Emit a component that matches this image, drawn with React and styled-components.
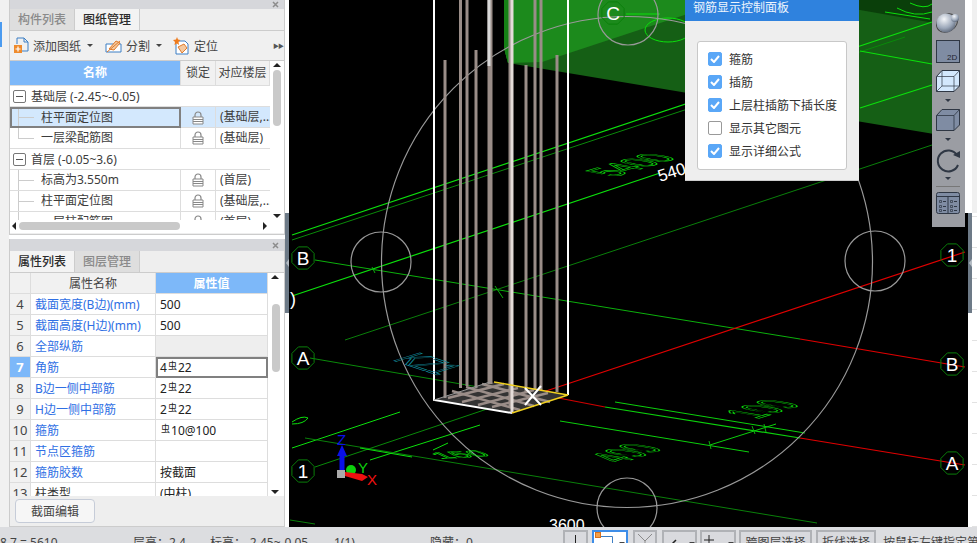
import React from 'react';
import styled, { createGlobalStyle } from 'styled-components';

const GlobalStyle = createGlobalStyle`
  html, body { margin: 0; padding: 0; width: 977px; height: 543px; overflow: hidden; background: #fff; }
  * { box-sizing: border-box; }
  body { font-family: "Noto Sans", "Noto Sans CJK SC", sans-serif; font-size: 12px; color: #333; }
`;

const Page = styled.div`
  width: 977px;
  height: 543px;
  display: flex;
  flex-direction: column;
  position: relative;
  overflow: hidden;
`;

const Main = styled.div`
  height: 527px;
  display: flex;
`;

const LeftGutter = styled.div`
  width: 9px;
  background: #f1f1f1;
  padding-top: 22px;
  &::before {
    content: '';
    display: block;
    width: 2px;
    height: 25px;
    background: #4b9bf0;
  }
`;

const Sidebar = styled.div`
  width: 276px;
  display: flex;
  flex-direction: column;
  gap: 4px;
`;

const Panel = styled.section`
  height: ${p => p.$h}px;
  display: flex;
  flex-direction: column;
  background: #eee;
  border-left: 1px solid #ccc;
  border-right: 1px solid #ccc;
  border-bottom: 1px solid #ccc;
`;

const PanelHead = styled.div`
  height: ${p => p.$h}px;
  flex: none;
  background: #d6d7db;
  display: flex;
  align-items: center;
  justify-content: flex-end;
  padding-right: 5px;
`;

const Tabs = styled.div`
  height: 22px;
  flex: none;
  display: flex;
  border-bottom: 1px solid #ccc;
`;

const Tab = styled.div`
  width: 65px;
  text-align: center;
  font-size: 12px;
  line-height: 21px;
  font-weight: 500;
  color: ${p => (p.$active ? '#2b2b2b' : '#8a8a8a')};
  background: ${p => (p.$active ? '#f3f3f3' : '#dedede')};
  border-right: 1px solid #ccc;
`;

const Toolbar = styled.div`
  height: 30px;
  flex: none;
  display: flex;
  align-items: center;
  padding-left: 4px;
  background: #f0f0f0;
  border-bottom: 1px solid #ccc;
  color: #444;
  position: relative;
`;

const ToolItem = styled.div`
  display: flex;
  align-items: center;
  gap: 4px;
  margin-right: ${p => p.$gap}px;
  font-size: 12px;
`;

const Caret = styled.span`
  width: 0;
  height: 0;
  margin-left: 2px;
  border: 3px solid transparent;
  border-top: 3px solid #444;
  border-bottom: 0;
`;

const More = styled.span`
  position: absolute;
  right: 1px;
  top: 10px;
  font-size: 6px;
  color: #555;
  letter-spacing: -1px;
`;

const TreeWrap = styled.div`
  height: 172px;
  flex: none;
  display: grid;
  grid-template-columns: 260px 14px;
  grid-template-rows: 159px 13px;
  background: #fff;
`;

const TreeBody = styled.div`
  overflow: hidden;
`;

const TreeHead = styled.div`
  display: grid;
  grid-template-columns: 171px 35px 54px;
  height: 25px;
  line-height: 24px;
  background: #f1f1f1;
  border-bottom: 1px solid #ddd;
  overflow: hidden;
  white-space: nowrap;
`;

const HeadCell = styled.div`
  text-align: center;
  border-right: 1px solid #ddd;
  font-weight: ${p => (p.$active ? 700 : 400)};
  background: ${p => (p.$active ? '#7db8f9' : 'transparent')};
  color: ${p => (p.$active ? '#fff' : '#444')};
  overflow: hidden;
`;

const GroupRow = styled.div`
  height: 21px;
  display: flex;
  align-items: center;
  gap: 5px;
  padding-left: 3px;
  border-bottom: 1px solid #ddd;
  color: #3c3c3c;
`;

const Toggle = styled.span`
  width: 13px;
  height: 13px;
  border: 1px solid #777;
  border-radius: 2px;
  display: flex;
  align-items: center;
  justify-content: center;
  &::before {
    content: '';
    width: 7px;
    height: 1px;
    background: #555;
  }
`;

const TreeRow = styled.div`
  height: 21px;
  display: grid;
  grid-template-columns: 171px 35px 54px;
  border-bottom: 1px solid #ddd;
  background: ${p => (p.$selected ? '#d3e8fd' : '#fff')};
  color: #3c3c3c;
  white-space: nowrap;
`;

const NameCell = styled.div`
  display: flex;
  align-items: stretch;
  line-height: 20px;
  padding-left: 8px;
  border-right: 1px solid #ddd;
  ${p => p.$selected && 'border: 2px solid #808080; padding-left: 6px; line-height: 17px;'}
`;

const Connector = styled.span`
  width: 23px;
  flex: none;
  background:
    linear-gradient(#ccc, #ccc) 0 0 / 1px ${p => (p.$last ? '50%' : '100%')} no-repeat,
    linear-gradient(#ccc, #ccc) 0 50% / 16px 1px no-repeat;
`;

const LockCell = styled.div`
  display: flex;
  align-items: center;
  justify-content: center;
  border-right: 1px solid #ddd;
`;

const FloorCell = styled.div`
  padding-left: 4px;
  line-height: 20px;
  overflow: hidden;
`;

const VScroll = styled.div`
  background: #fff;
  display: flex;
  flex-direction: column;
  align-items: center;
  position: relative;
  padding-top: 9px;
  &::before, &::after {
    content: '';
    position: absolute;
    left: 3px;
    border: 4px solid transparent;
  }
  &::before { top: 2px; border-top: 0; border-bottom: 4px solid #222; }
  &::after { bottom: 2px; border-bottom: 0; border-top: 4px solid #222; }
`;

const VThumb = styled.div`
  width: 8px;
  height: ${p => p.$h}px;
  margin-top: ${p => p.$top}px;
  border-radius: 4px;
  background: #c9c9c9;
`;

const HScroll = styled.div`
  position: relative;
  padding: 2px 0 0 9px;
  background: #fff;
  &::before, &::after {
    content: '';
    position: absolute;
    top: 2px;
    border: 4px solid transparent;
  }
  &::before { left: 2px; border-left: 0; border-right: 4px solid #222; }
  &::after { right: 3px; border-right: 0; border-left: 4px solid #222; }
`;

const HThumb = styled.div`
  width: 161px;
  height: 8px;
  border-radius: 4px;
  background: #c9c9c9;
`;

const Corner = styled.div`
  background: #fff;
`;

const PropWrap = styled.div`
  height: 223px;
  flex: none;
  display: grid;
  grid-template-columns: 258px 16px;
  background: #fff;
  overflow: hidden;
`;

const PropGrid = styled.div`
  display: grid;
  grid-template-columns: 21px 125px 112px;
  grid-auto-rows: 21px;
  overflow: hidden;
  white-space: nowrap;
`;

const PropHead = styled.div`
  text-align: center;
  line-height: 21px;
  background: ${p => (p.$active ? '#7db8f9' : '#f1f1f1')};
  color: ${p => (p.$active ? '#fff' : '#444')};
  font-weight: ${p => (p.$active ? 600 : 400)};
  border-right: 1px solid #ddd;
  border-bottom: 1px solid #ddd;
`;

const IndexCell = styled.div`
  text-align: center;
  font-size: 13px;
  line-height: 21px;
  background: ${p => (p.$active ? '#7db8f9' : '#f1f1f1')};
  color: ${p => (p.$active ? '#fff' : '#444')};
  font-weight: ${p => (p.$active ? 700 : 400)};
  border-right: 1px solid #ddd;
  border-bottom: 1px solid #ddd;
`;

const LabelCell = styled.div`
  padding-left: 4px;
  line-height: 21px;
  color: ${p => (p.$plain ? '#333' : '#2f6fe4')};
  border-right: 1px solid #ddd;
  border-bottom: 1px solid #ddd;
`;

const ValueCell = styled.div`
  padding-left: 4px;
  line-height: 21px;
  color: #222;
  background: ${p => (p.$muted ? '#eee' : '#fff')};
  border-right: 1px solid #ddd;
  border-bottom: 1px solid #ddd;
  ${p => p.$selected && 'border: 2px solid #808080; padding-left: 2px; line-height: 17px;'}
`;

const Rebar = styled.span`
  font-size: 9px;
  position: relative;
  top: -3px;
  margin: 0 1px;
`;

const PropFoot = styled.div`
  flex: 1;
  padding: 3px 0 0 5px;
`;

const FootButton = styled.button`
  width: 80px;
  height: 24px;
  padding: 0;
  background: #f6f6f6;
  border: 1px solid #c6ccd8;
  border-radius: 4px;
  font: inherit;
  color: #444;
`;

const Splitter = styled.div`
  width: 4px;
  flex: none;
  background: #fff;
  padding-top: 213px;
`;

const SplitGrip = styled.div`
  height: 100px;
  background: #6d7a87;
  display: flex;
  align-items: center;
  justify-content: center;
  &::before {
    content: '';
    border: 4px solid transparent;
    border-left: 0;
    border-right: 3px solid #b4bcc4;
  }
`;

const Canvas = styled.div`
  width: 679px;
  flex: none;
  background: #000;
  position: relative;
  overflow: hidden;
`;

const Drawing = styled.svg`
  display: block;
  width: 679px;
  height: 527px;
`;

const ControlPanel = styled.div`
  position: absolute;
  left: 396px;
  top: 0;
  width: 174px;
  height: 181px;
  background: #eee;
  border-bottom: 1px solid #ccc;
`;

const ControlTitle = styled.div`
  height: 21px;
  background: #2f82de;
  color: #eef5fd;
  line-height: 15px;
  padding-left: 8px;
  font-size: 12px;
`;

const ControlBox = styled.div`
  margin: 20px 12px 0 12px;
  height: 129px;
  background: #fff;
  border: 1px solid #c8c8c8;
  border-radius: 3px;
  padding: 5px 0 0 10px;
`;

const CheckRow = styled.div`
  height: 23px;
  display: flex;
  align-items: center;
  gap: 7px;
  color: #333;
`;

const CheckBox = styled.span`
  width: 14px;
  height: 14px;
  border-radius: 2px;
  display: flex;
  align-items: center;
  justify-content: center;
  background: ${p => (p.$on ? '#5aa7f7' : '#fff')};
  border: 1px solid ${p => (p.$on ? '#5aa7f7' : '#999')};
`;

const ViewTools = styled.div`
  position: absolute;
  left: 643px;
  top: 0;
  width: 33px;
  height: 227px;
  background: #9b9da3;
`;

const RightCover = styled.div`
  position: absolute;
  right: 0;
  top: 0;
  width: 12px;
  height: 213px;
  background: linear-gradient(to right, #fff 7px, #f0f0f0 7px);
`;

const RightEdge = styled.div`
  width: 5px;
  flex: none;
  background: repeating-linear-gradient(#fff 0, #fff 30px, #e2e2e2 30px, #e2e2e2 31px);
`;

const StatusBar = styled.footer`
  height: 16px;
  flex: none;
  background: #dcdde0;
  display: flex;
  align-items: flex-start;
  overflow: hidden;
  color: #444;
  white-space: nowrap;
`;

const StatusText = styled.span`
  width: ${p => p.$w}px;
  flex: none;
  margin-top: 8px;
  line-height: 16px;
`;

const StatusButton = styled.div`
  width: ${p => p.$w}px;
  height: 26px;
  flex: none;
  margin: 3px ${p => p.$gap}px 0 0;
  background: ${p => (p.$active ? '#fff' : '#d9dade')};
  border: ${p => (p.$active ? '2px solid #3d8de8' : '2px solid #b0b2b6')};
  border-bottom: 0;
  padding-top: 3px;
  text-align: center;
  line-height: 16px;
  overflow: hidden;
`;

const StatusGlyph = styled.svg`
  display: block;
  margin-top: -3px;
`;

const CloseMark = () => (
  <svg width="7" height="7" viewBox="0 0 7 7">
    <path d="M1 1l5 5M6 1L1 6" stroke="#8c8c8c" strokeWidth="1.500" />
  </svg>
);

const LockIcon = () => (
  <svg width="12" height="14" viewBox="0 0 12 14">
    <path d="M3 6V4a3 3 0 0 1 6 0v2" fill="none" stroke="#888" strokeWidth="1.2" />
    <path d="M1 6h10v7H1z" fill="#fff" stroke="#888" />
    <path d="M1 8.5h10M1 10.5h10" stroke="#888" />
  </svg>
);

const AddIcon = () => (
  <svg width="15" height="17" viewBox="0 0 15 17">
    <path d="M3 7V1h7l4 4v9H8" fill="none" stroke="#3d7fc4" />
    <path d="M10 1v4h4" fill="none" stroke="#3d7fc4" />
    <path d="M0 8h8v8H0z" fill="#ee8a2c" />
    <path d="M4 9.5v5M1.5 12h5" stroke="#fff" strokeWidth="1.2" />
  </svg>
);

const SplitIcon = () => (
  <svg width="17" height="16" viewBox="0 0 17 16">
    <path d="M1 6h15v8H1z" fill="#fff" stroke="#3d7fc4" />
    <path d="M4 11l7-8 4 2-6 7z" fill="#f4c9a0" stroke="#e07a2a" />
    <path d="M2 14l13-11" stroke="#e07a2a" />
  </svg>
);

const LocateIcon = () => (
  <svg width="17" height="18" viewBox="0 0 17 18">
    <path d="M6 4h6l3 3v10H3V7" fill="#fff" stroke="#3d7fc4" />
    <path d="M5 10l6-3 3 4-5 5z" fill="#f4c9a0" stroke="#e07a2a" />
    <path d="M4 0l1 2.500 2.500.5L5.500 5 6 8 4 6.500 1.500 8 2 5 0 3l3-.5z" fill="#ee7a1c" />
  </svg>
);

const Tick = () => (
  <svg width="10" height="8" viewBox="0 0 10 8">
    <path d="M1 4l3 3 5-6" fill="none" stroke="#fff" strokeWidth="2" />
  </svg>
);

const octagon = (cx, cy, r) => {
  const pts = [];
  for (let i = 0; i < 8; i++) {
    const a = (Math.PI / 4) * i + Math.PI / 8;
    pts.push(`${(cx + r * Math.cos(a)).toFixed(1)},${(cy + r * Math.sin(a)).toFixed(1)}`);
  }
  return pts.join(' ');
};

// page coordinates: x1 y1 x2 y2 colour width
const lines = [
  [292, 235, 932, 22, '#0ce00c', 1.2],
  [292, 240, 905, 37, '#0a8a0a', 1],
  [292, 296, 660, 173, '#0ce00c', 1.2],
  [860, 108, 932, 85, '#0ce00c', 1.2],
  [345, 340, 932, 145, '#0a7f0a', 1],
  [860, 51, 932, 64, '#0ce00c', 1.2],
  [315, 260, 800, 339, '#0cb00c', 1],
  [800, 339, 965, 367, '#e00000', 1.2],
  [543, 392, 965, 252, '#e00000', 1.2],
  [310, 358, 490, 389, '#0a8a0a', 1],
  [543, 395, 605, 407, '#d00000', 1.2],
  [605, 407, 800, 438, '#0cd00c', 1.2],
  [800, 438, 965, 465, '#e00000', 1.2],
  [615, 402, 805, 433, '#0cd00c', 1],
  [560, 421, 749, 452, '#0cd00c', 1],
  [710, 445, 776, 424, '#0cd00c', 1],
  [315, 467, 490, 408, '#0a8a0a', 1],
  [370, 460, 480, 425, '#0ce00c', 1],
  [292, 448, 400, 412, '#0ce00c', 1],
  [305, 438, 817, 523, '#0a7f0a', 1],
  [360, 448, 412, 457, '#0ce00c', 1],
  [290, 520, 315, 524, '#0a7f0a', 1],
  [433, 450, 448, 443, '#0ce00c', 1],
];

const bars = [
  [445, 60, 398, 3], [460.5, 0, 388, 3], [467, 0, 386, 3], [476, 50, 388, 3],
  [490, 0, 384, 5], [510, 0, 406, 3], [526, 65, 392, 3], [535, 0, 390, 3],
  [541, 0, 390, 3], [557, 55, 392, 3],
];

const bubbles = [
  [303, 258, 'B'], [303, 358, 'A'], [303, 471, '1'], [613, 13, 'C'],
  [952, 255, '1'], [952, 364, 'B'], [952, 463, 'A'],
];

const rings = [[628, 15], [381, 262], [875, 261], [627, 508]];

// dimension labels lie flat on the floor plane of the model
const flatLabels = [
  ['5400', 'matrix(1.7 -0.5 2.6 0.45 614 177)', '#0ce00c'],
  ['150', 'matrix(1.8 -0.1 1.1 0.5 441 459)', '#0ce00c'],
  ['400', 'matrix(1.5 -0.5 3 0.5 622 463)', '#0ce00c'],
  ['100', 'matrix(1.6 -0.5 3 0.5 757 419)', '#0ce00c'],
  ['KZ1', 'matrix(1.5 0.5 -2.2 0.67 392 360)', '#128a9a'],
];

const Scene = () => (
  <Drawing viewBox="289 0 679 527">
    <rect x="289" y="0" width="679" height="527" fill="#000" />
    <path d="M504 0H940V135L508 63 504 48z" fill="#155f15" />
    <path d="M690 0H940V24L860 10 690 -18z" fill="#0a3f0a" />
    <path d="M504 0V48L508 63 542 62 645 28 730 0z" fill="#1c8a1c" />
    <path d="M504 0V48L508 63V0z" fill="#158015" />

    <ellipse cx="668" cy="30" rx="23" ry="12" fill="none" stroke="#0ce00c" />
    <path d="M626 14H660" stroke="#0ce00c" />
    <path d="M885 12L930 19M897 8Q915 18 932 12M910 3Q925 10 932 4" fill="none" stroke="#0ce00c" />

    {lines.map(([x1, y1, x2, y2, c, w], i) => (
      <line key={i} x1={x1} y1={y1} x2={x2} y2={y2} stroke={c} strokeWidth={w} />
    ))}
    <path d="M372 267l3 6M495 286l8 12M709 441l2 8M752 426l3 8M764 424l2 8" stroke="#0cb00c" />

    <circle cx="627" cy="262" r="245.500" fill="none" stroke="#999" strokeWidth="1.200" />
    {rings.map(([x, y]) => (
      <circle key={x} cx={x} cy={y} r="30" fill="none" stroke="#999" strokeWidth="1.200" />
    ))}

    <path d="M434 400L512 413 568 395 490 382z" fill="#333" />
    {bars.map(([x, top, bottom, w]) => (
      <line key={x} x1={x} y1={top} x2={x} y2={bottom} stroke="#9a8d88" strokeWidth={w} />
    ))}
    <line x1="489" y1="0" x2="489" y2="66" stroke="#d8d8d8" strokeWidth="3" />
    <path d="M448 398L504 384M462 402L518 388M478 405L534 390M492 407L548 393" stroke="#9a8d88" strokeWidth="2.500" />
    <path d="M452 391L520 410M466 387L534 406M482 384L550 402" stroke="#9a8d88" strokeWidth="2.500" />
    <path d="M434 0V400L512 413M568 0V395" fill="none" stroke="#fff" strokeWidth="2" />
    <line x1="512" y1="0" x2="512" y2="413" stroke="#e4dcd8" strokeWidth="3" />
    <path d="M512 413L568 395 494 382" fill="none" stroke="#f0d020" strokeWidth="1.500" />
    <path d="M525 388L541 405M541 386L525 405" stroke="#fff" strokeWidth="2" />
    <path d="M434 400L490 382" stroke="#999" strokeWidth="1" />

    {bubbles.map(([x, y, t]) => (
      <g key={`${x}${y}`}>
        <polygon points={octagon(x, y, 12)} fill="none" stroke="#0a7f0a" />
        <text x={x} y={y + 7} fill="#fff" fontSize="19" textAnchor="middle" fontFamily="Liberation Sans">{t}</text>
      </g>
    ))}
    <text x="290" y="305" fill="#fff" fontSize="18" fontFamily="Liberation Sans">)</text>
    <path d="M292 422Q302 415 308 418 304 424 292 424" fill="none" stroke="#0ce00c" />

    {flatLabels.map(([t, m, c]) => (
      <text key={t} transform={m} fill="none" stroke={c} strokeWidth="1" vectorEffect="non-scaling-stroke" fontSize="17" fontFamily="Liberation Sans">{t}</text>
    ))}
    <text transform="rotate(-18 660 182)" x="660" y="182" fill="#fff" fontSize="17" fontFamily="Liberation Sans">5400</text>
    <text x="549" y="531" fill="#fff" fontSize="16" fontFamily="Liberation Sans">3600</text>

    <line x1="342" y1="472" x2="342" y2="453" stroke="#0a10e8" strokeWidth="5" />
    <path d="M337 456L342 445 347 456z" fill="#0a10e8" />
    <text x="337" y="445" fill="#0a10e8" fontSize="15" fontFamily="Liberation Sans">Z</text>
    <rect x="337" y="470" width="8" height="8" fill="#aaa" />
    <circle cx="351" cy="470" r="5" fill="#0cd00c" />
    <path d="M345 472L362 474 368 477 362 481 345 476z" fill="#ee1010" />
    <text x="358" y="473" fill="#0cd00c" fontSize="15" fontFamily="Liberation Sans">Y</text>
    <text x="367" y="485" fill="#ee1010" fontSize="15" fontFamily="Liberation Sans">X</text>
  </Drawing>
);

const ViewIcons = () => (
  <svg width="33" height="227" viewBox="0 0 33 227" style={{ display: 'block' }}>
    <defs>
      <radialGradient id="ball" cx="0.4" cy="0.3" r="0.8">
        <stop offset="0" stopColor="#f4f6f9" />
        <stop offset="0.6" stopColor="#9aa6b8" />
        <stop offset="1" stopColor="#4c5566" />
      </radialGradient>
    </defs>
    <ellipse cx="15" cy="23" rx="11" ry="8.500" fill="none" stroke="#444" transform="rotate(-30 15 23)" />
    <circle cx="14" cy="23" r="9.500" fill="url(#ball)" />
    <circle cx="23" cy="18" r="4" fill="url(#ball)" />

    <rect x="4.500" y="40.500" width="23" height="22" fill="#7f8ca3" stroke="#2f3744" />
    <text x="15" y="60" fontSize="8" fill="#1d2430" fontFamily="Liberation Sans">2D</text>

    <path d="M4.500 76.500L10 70.500H27.500V86L22 91.500H4.500z" fill="#d3e8fd" stroke="#2f3744" />
    <path d="M4.500 76.500H22V91.500M22 76.500L27.500 70.500M10 70.500V86H27.500M4.500 91.500L10 86" fill="none" stroke="#2f3744" strokeWidth="0.700" />
    <path d="M13 99h6l-3 3z" fill="#2f3744" />

    <path d="M4.500 115.500L10 109.500H27.500V125L22 130.500H4.500z" fill="#7f8ca3" stroke="#2f3744" />
    <path d="M4.500 115.500H22V130.500M22 115.500L27.500 109.500" fill="none" stroke="#2f3744" strokeWidth="0.800" />
    <path d="M13 138h6l-3 3z" fill="#2f3744" />

    <path d="M25 155a10.500 10.500 0 1 0 1 10" fill="none" stroke="#2f3744" strokeWidth="2" />
    <path d="M21 155l7 3 0-7z" fill="#2f3744" />
    <path d="M13 177h6l-3 3z" fill="#2f3744" />

    <line x1="4" y1="186.500" x2="28" y2="186.500" stroke="#777" />
    <rect x="4.500" y="192.500" width="23" height="21" rx="2" fill="#7f8ca3" stroke="#2f3744" />
    <path d="M4.500 196.500H27.500M16 196.500V213" stroke="#2f3744" />
    <path d="M7.500 200.500h2v2h-2zM7.500 205.500h2v2h-2zM7.500 209.500h2v2h-2zM18.500 200.500h2v2h-2zM18.500 205.500h2v2h-2zM18.500 209.500h2v2h-2z" fill="none" stroke="#2f3744" strokeWidth="0.700" />
    <path d="M11 201.500h3M11 206.500h3M11 210.500h3M22 201.500h3M22 206.500h3M22 210.500h3" stroke="#2f3744" />
  </svg>
);

const treeRows = [
  { group: '基础层 (-2.45~-0.05)' },
  { name: '柱平面定位图', floor: '(基础层,...', selected: true },
  { name: '一层梁配筋图', floor: '(基础层)', last: true },
  { group: '首层 (-0.05~3.6)' },
  { name: '标高为3.550m', floor: '(首层)' },
  { name: '柱平面定位图', floor: '(基础层,...' },
  { name: '一层柱配筋图', floor: '(首层)' },
];

const R = () => <Rebar>虫</Rebar>;

const props = [
  [4, '截面宽度(B边)(mm)', '500'],
  [5, '截面高度(H边)(mm)', '500'],
  [6, '全部纵筋', '', { muted: true }],
  [7, '角筋', <>4<R />22</>, { selected: true }],
  [8, 'B边一侧中部筋', <>2<R />22</>],
  [9, 'H边一侧中部筋', <>2<R />22</>],
  [10, '箍筋', <><R />10@100</>],
  [11, '节点区箍筋', ''],
  [12, '箍筋胶数', '按截面'],
  [13, '柱类型', '(中柱)', { plain: true }],
];

const checks = [
  ['箍筋', true],
  ['插筋', true],
  ['上层柱插筋下插长度', true],
  ['显示其它图元', false],
  ['显示详细公式', true],
];

const statusButtons = [
  { w: 25, gap: 4, glyph: <path d="M10.500 3v13" stroke="#222" /> },
  {
    w: 36,
    gap: 5,
    active: true,
    glyph: (
      <>
        <path d="M4.500 4.500h14V16" fill="none" stroke="#3d7fc4" />
        <rect x="1.500" y="0.500" width="5" height="5" fill="#f3a04a" stroke="#d9711c" />
        <path d="M25 10h6l-3 3z" fill="#444" />
      </>
    ),
  },
  { w: 24, gap: 5, glyph: <path d="M3 2l7 7 7-7M10 9v6" fill="none" stroke="#8a8a8a" /> },
  {
    w: 35,
    gap: 3,
    glyph: (
      <>
        <path d="M6 14l6-6" stroke="#222" strokeWidth="1.500" />
        <path d="M25 10h6l-3 3z" fill="#444" />
      </>
    ),
  },
  {
    w: 36,
    gap: 3,
    glyph: (
      <>
        <path d="M7 3v10M2 8h10" stroke="#222" />
        <path d="M26 10h6l-3 3z" fill="#444" />
      </>
    ),
  },
  { w: 73, gap: 4, t: '跨图层选择' },
  { w: 60, gap: 7, t: '折线选择' },
];

export default function App() {
  return (
    <Page>
      <GlobalStyle />
      <Main>
        <LeftGutter />
        <Sidebar>
          <Panel $h={235}>
            <PanelHead $h={9}><CloseMark /></PanelHead>
            <Tabs>
              <Tab>构件列表</Tab>
              <Tab $active>图纸管理</Tab>
            </Tabs>
            <Toolbar>
              <ToolItem $gap={12}><AddIcon />添加图纸<Caret /></ToolItem>
              <ToolItem $gap={11}><SplitIcon />分割<Caret /></ToolItem>
              <ToolItem $gap={0}><LocateIcon />定位</ToolItem>
              <More>▶▶</More>
            </Toolbar>
            <TreeWrap>
              <TreeBody>
                <TreeHead>
                  <HeadCell $active>名称</HeadCell>
                  <HeadCell>锁定</HeadCell>
                  <HeadCell>对应楼层</HeadCell>
                </TreeHead>
                {treeRows.map((r, i) =>
                  r.group ? (
                    <GroupRow key={i}><Toggle />{r.group}</GroupRow>
                  ) : (
                    <TreeRow key={i} $selected={r.selected}>
                      <NameCell $selected={r.selected}>
                        <Connector $last={r.last} />
                        {r.name}
                      </NameCell>
                      <LockCell><LockIcon /></LockCell>
                      <FloorCell>{r.floor}</FloorCell>
                    </TreeRow>
                  )
                )}
              </TreeBody>
              <VScroll><VThumb $top={0} $h={56} /></VScroll>
              <HScroll><HThumb /></HScroll>
              <Corner />
            </TreeWrap>
          </Panel>
          <Panel $h={288}>
            <PanelHead $h={12}><CloseMark /></PanelHead>
            <Tabs>
              <Tab $active>属性列表</Tab>
              <Tab>图层管理</Tab>
            </Tabs>
            <PropWrap>
              <PropGrid>
                <PropHead />
                <PropHead>属性名称</PropHead>
                <PropHead $active>属性值</PropHead>
                {props.map(([n, label, value, o = {}]) => (
                  <React.Fragment key={n}>
                    <IndexCell $active={o.selected}>{n}</IndexCell>
                    <LabelCell $plain={o.plain}>{label}</LabelCell>
                    <ValueCell $muted={o.muted} $selected={o.selected}>{value}</ValueCell>
                  </React.Fragment>
                ))}
              </PropGrid>
              <VScroll><VThumb $top={22} $h={68} /></VScroll>
            </PropWrap>
            <PropFoot><FootButton>截面编辑</FootButton></PropFoot>
          </Panel>
        </Sidebar>
        <Splitter><SplitGrip /></Splitter>
        <Canvas>
          <Scene />
          <ControlPanel>
            <ControlTitle>钢筋显示控制面板</ControlTitle>
            <ControlBox>
              {checks.map(([label, on]) => (
                <CheckRow key={label}>
                  <CheckBox $on={on}>{on && <Tick />}</CheckBox>
                  {label}
                </CheckRow>
              ))}
            </ControlBox>
          </ControlPanel>
          <ViewTools><ViewIcons /></ViewTools>
        </Canvas>
        <Splitter><SplitGrip /></Splitter>
        <RightEdge />
        <RightCover />
      </Main>
      <StatusBar>
        <StatusText $w={133}>8.7 = 5610</StatusText>
        <StatusText $w={77}>层高：2.4</StatusText>
        <StatusText $w={124}>标高：-2.45~-0.05</StatusText>
        <StatusText $w={96}>1(1)</StatusText>
        <StatusText $w={133}>隐藏：0</StatusText>
        {statusButtons.map((b, i) => (
          <StatusButton key={i} $w={b.w} $gap={b.gap} $active={b.active}>
            {b.glyph ? <StatusGlyph width={b.w - 4} height="20" viewBox={`0 0 ${b.w - 4} 20`}>{b.glyph}</StatusGlyph> : b.t}
          </StatusButton>
        ))}
        <StatusText $w={94}>按鼠标左键指定第一个</StatusText>
      </StatusBar>
    </Page>
  );
}
